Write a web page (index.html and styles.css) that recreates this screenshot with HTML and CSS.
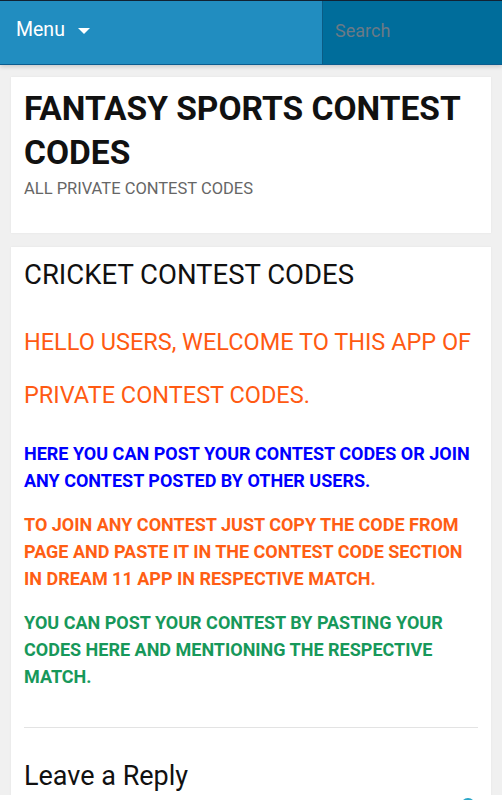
FILE: index.html
```html
<!DOCTYPE html>
<html lang="en">
<head>
    <meta charset="UTF-8">
    <meta name="viewport" content="width=device-width, initial-scale=1.0">
    <title>Fantasy Sports Contest Codes</title>
    <link rel="stylesheet" href="styles.css">
</head>
<body>
    <header class="topbar">
        <div class="menu-toggle">
            <span>Menu</span>
            <span class="caret"></span>
        </div>
        <div class="search">
            <input type="text" placeholder="Search">
        </div>
    </header>

    <div class="site">
        <div class="card brand">
            <h1 class="site-title">FANTASY SPORTS CONTEST CODES</h1>
            <p class="site-desc">ALL PRIVATE CONTEST CODES</p>
        </div>

        <div class="card post">
            <h2 class="post-title">CRICKET CONTEST CODES</h2>
            <p class="intro">HELLO USERS, WELCOME TO THIS APP OF PRIVATE CONTEST CODES.</p>
            <p class="note blue">HERE YOU CAN POST YOUR CONTEST CODES OR JOIN ANY CONTEST POSTED BY OTHER USERS.</p>
            <p class="note orange">TO JOIN ANY CONTEST JUST COPY THE CODE FROM PAGE AND PASTE IT IN THE CONTEST CODE SECTION IN DREAM 11 APP IN RESPECTIVE MATCH.</p>
            <p class="note green">YOU CAN POST YOUR CONTEST BY PASTING YOUR CODES HERE AND MENTIONING THE RESPECTIVE MATCH.</p>
            <hr>
            <h3 class="reply-title">Leave a Reply</h3>
        </div>
    </div>

    <div class="bottom-strip"><span class="dot"></span></div>
</body>
</html>
```

FILE: styles.css
```css
body {
    margin: 0;
    background-color: #f0f0f0;
    font-family: Roboto, "Noto Sans", Arial, sans-serif;
    color: #111;
}
.topbar {
    display: flex;
    height: 63px;
    background-color: #218dc0;
    border-top: 1px solid #123;
    border-bottom: 1px solid #0b5c8f;
    box-shadow: 0 2px 4px rgba(0, 0, 0, 0.15);
}
.menu-toggle {
    flex: 1;
    display: flex;
    align-items: center;
    padding-left: 16px;
    padding-bottom: 6px;
    color: #fff;
    font-size: 19.5px;
}
.caret {
    margin-left: 13px;
    margin-top: 2px;
    width: 0;
    height: 0;
    border-left: 6px solid transparent;
    border-right: 6px solid transparent;
    border-top: 6px solid #fff;
}
.search {
    width: 179px;
    background-color: #006d9b;
    border-left: 1px solid #0b5c85;
    display: flex;
    align-items: center;
    padding-bottom: 4px;
}
.search input {
    width: 100%;
    border: none;
    background: transparent;
    padding: 0 0 0 12px;
    font-family: inherit;
    font-size: 18px;
    color: #fff;
    outline: none;
}
.search input::placeholder {
    color: #6b7a86;
}
.site {
    padding: 12px 11px 0;
}
.card {
    background-color: #fff;
    box-shadow: 0 0 2px rgba(0, 0, 0, 0.06);
    padding: 0 13px;
    margin-bottom: 14px;
}
.brand {
    height: 156px;
    padding-top: 10px;
    box-sizing: border-box;
}
.site-title {
    margin: 0;
    font-size: 33.5px;
    line-height: 44px;
    font-weight: 700;
    color: #111;
}
.site-desc {
    margin: 4px 0 0;
    font-size: 16.5px;
    color: #666;
}
.post {
    padding-top: 12px;
    padding-bottom: 30px;
}
.post-title {
    margin: 0;
    font-size: 27.5px;
    font-weight: 400;
    line-height: 32px;
}
.intro {
    margin: 25px 0 18px;
    font-size: 23.5px;
    line-height: 53px;
    color: #ff5a12;
}
.note {
    margin: 0 0 17px;
    font-size: 18px;
    font-weight: 700;
    line-height: 27px;
}
.blue {
    color: #0000ff;
}
.orange {
    color: #ff5e14;
}
.green {
    color: #17985a;
}
hr {
    margin: 37px 0 0;
    border: none;
    border-top: 1px solid #e3e3e3;
}
.reply-title {
    margin: 32px 0 0;
    font-size: 27px;
    font-weight: 400;
}
.bottom-strip {
    position: fixed;
    left: 0;
    right: 0;
    bottom: 0;
    height: 5px;
    background-color: #fff;
}
.bottom-strip .dot {
    position: absolute;
    left: 461px;
    top: 3px;
    width: 14px;
    height: 14px;
    border-radius: 50%;
    background-color: #2aa6c8;
}
```
